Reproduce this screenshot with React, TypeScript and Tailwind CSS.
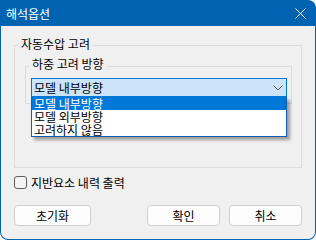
export default function App() {
  return (
    <div className="h-[240px] w-[316px] bg-white font-['Noto_Sans_CJK_KR',sans-serif] text-[12px] leading-[14px] text-black">
      <div className="flex h-full w-full flex-col overflow-hidden rounded-b-[8px] rounded-tr-[8px] bg-[#0063b1]">
        <div className="flex h-[26px] shrink-0 items-center justify-between pl-[6px] pr-[10px] text-white">
          <span className="mt-[2px]">해석옵션</span>
          <svg width="11" height="11" viewBox="0 0 11 11" className="mt-[1px]">
            <path d="M0.5 0.5 L10.5 10.5 M10.5 0.5 L0.5 10.5" stroke="white" strokeWidth="1" fill="none" />
          </svg>
        </div>
        <div className="mx-[1px] mb-[1px] flex flex-1 flex-col rounded-b-[7px] bg-[#f0f0f0] px-[13px] pt-[19px]">
          <div className="relative h-[123px] border border-[#dcdcdc]">
            <span className="absolute -top-[9px] left-[3px] bg-[#f0f0f0] px-[3px]">자동수압 고려</span>
            <div className="relative ml-[10px] mr-[9px] mt-[20px] h-[38px] border border-[#dcdcdc]">
              <span className="absolute -top-[10px] left-[3px] bg-[#f0f0f0] px-[3px]">하중 고려 방향</span>
              <div className="relative ml-[5px] mr-[4px] mt-[11px]">
                <div className="flex h-[19px] items-center justify-between border border-[#0078d4] bg-[#cce4f7] pl-[2px] pr-[3px]">
                  <span>모델 내부방향</span>
                  <svg width="10" height="6" viewBox="0 0 10 6">
                    <path d="M0.5 0.5 L5 5 L9.5 0.5" stroke="#5a5a5a" strokeWidth="1" fill="none" />
                  </svg>
                </div>
                <div className="absolute left-0 right-0 top-full z-10 border border-t-0 border-[#0f5fb0] bg-white shadow-[3px_3px_3px_rgba(0,0,0,0.35)]">
                  <div className="h-[13px] bg-[#0078d7] pl-[2px] leading-[13px] text-white">모델 내부방향</div>
                  <div className="h-[13px] pl-[2px] leading-[13px]">모델 외부방향</div>
                  <div className="h-[13px] pl-[2px] leading-[13px]">고려하지 않음</div>
                </div>
              </div>
            </div>
          </div>
          <div className="mt-[8px] flex h-[13px] items-center gap-[4px]">
            <div className="h-[13px] w-[13px] shrink-0 rounded-[3px] border border-[#5f5f5f] bg-[#f4f4f4]" />
            <span>지반요소 내력 출력</span>
          </div>
          <div className="mt-[16px] flex items-center">
            <button className="flex h-[21px] w-[77px] items-center justify-center rounded-[4px] border border-[#d0d0d0] bg-[#fdfdfd]">초기화</button>
            <button className="ml-auto flex h-[21px] w-[73px] items-center justify-center rounded-[4px] border border-[#d0d0d0] bg-[#fdfdfd]">확인</button>
            <button className="ml-[9px] flex h-[21px] w-[73px] items-center justify-center rounded-[4px] border border-[#d0d0d0] bg-[#fdfdfd]">취소</button>
          </div>
        </div>
      </div>
    </div>
  );
}
